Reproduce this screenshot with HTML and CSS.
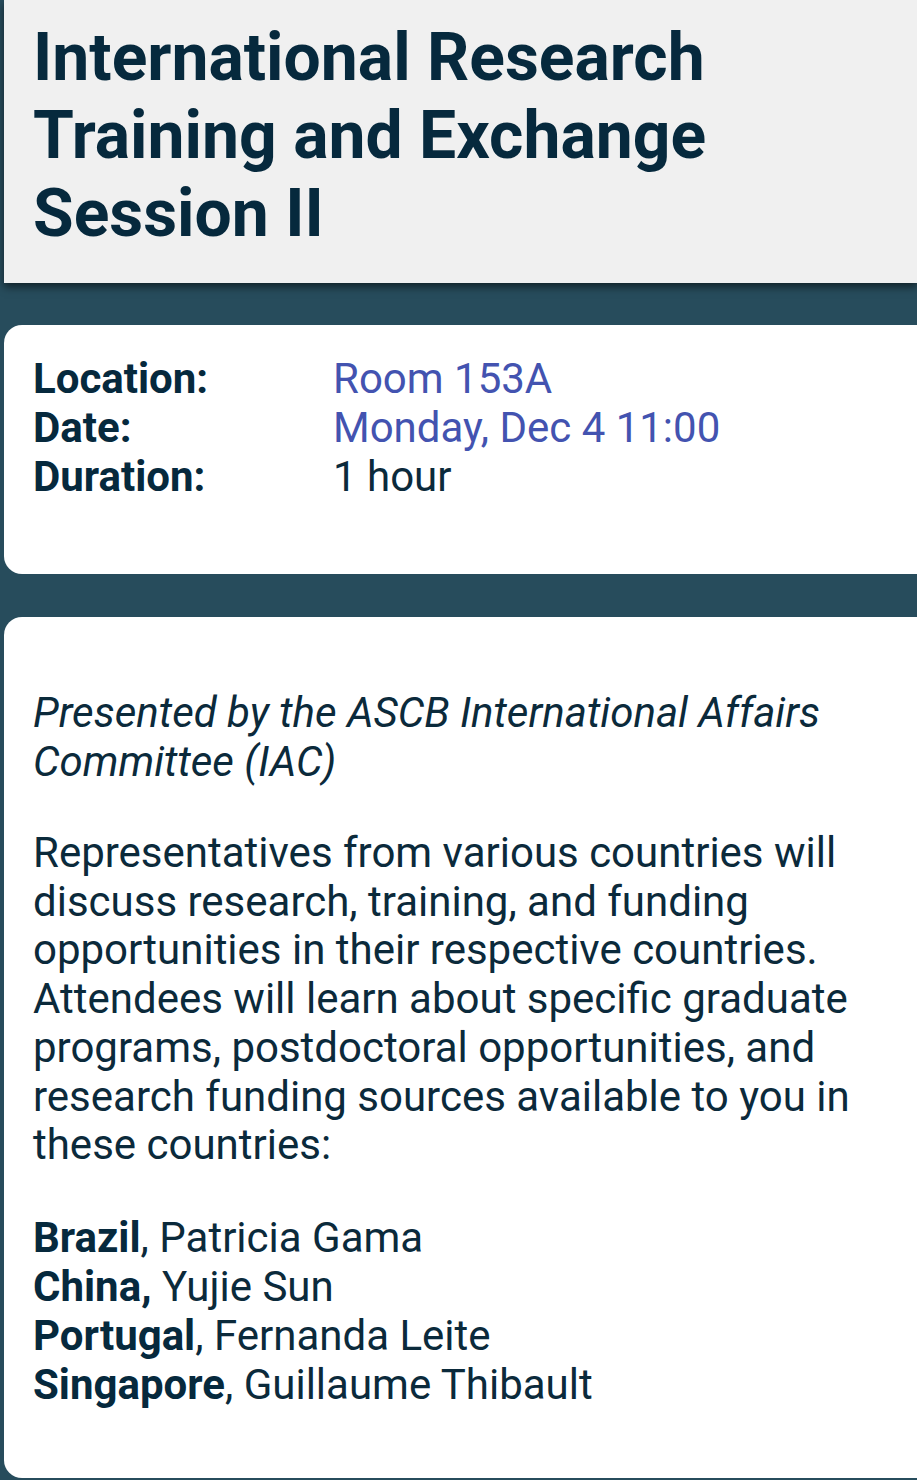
FILE: index.html
```html
<!DOCTYPE html>
<html lang="en">
<head>
<meta charset="utf-8">
<title>International Research Training and Exchange Session II</title>
<link rel="stylesheet" href="styles.css">
</head>
<body>
<header class="header">
  <h1 class="title">International Research Training and Exchange Session II</h1>
</header>
<section class="card info">
  <div class="info-grid">
    <div class="label">Location:</div><div class="value link">Room 153A</div>
    <div class="label">Date:</div><div class="value link">Monday, Dec 4 11:00</div>
    <div class="label">Duration:</div><div class="value">1 hour</div>
  </div>
</section>
<section class="card desc">
  <p class="intro">Presented by the ASCB International Affairs Committee (IAC)</p>
  <p class="para">Representatives from various countries will discuss research, training, and funding opportunities in their respective countries. Attendees will learn about specific graduate programs, postdoctoral opportunities, and research funding sources available to you in these countries:</p>
  <p class="list"><b>Brazil</b>, Patricia Gama<br><b>China,</b> Yujie Sun<br><b>Portugal</b>, Fernanda Leite<br><b>Singapore</b>, Guillaume Thibault</p>
</section>
</body>
</html>
```

FILE: styles.css
```css
html, body {
  margin: 0;
  padding: 0;
}
body {
  background: #274c5c;
  font-family: Roboto, "Noto Sans", sans-serif;
  color: #0b2a3b;
  min-height: 1480px;
  overflow: hidden;
}
.header {
  margin-left: 4px;
  background: #f0f0f0;
  height: 283px;
  box-sizing: border-box;
  padding: 19px 30px 0 29px;
  box-shadow: 0 4px 8px rgba(0, 0, 0, 0.55);
  position: relative;
}
.title {
  margin: 0;
  font-size: 66px;
  font-weight: 700;
  line-height: 78px;
  color: #06293d;
}
.card {
  margin-left: 4px;
  background: #ffffff;
  border-radius: 18px 0 0 18px;
  padding-left: 29px;
  padding-right: 30px;
  font-size: 42px;
  line-height: 49px;
}
.info {
  margin-top: 42px;
  height: 249px;
  box-sizing: border-box;
  padding-top: 29px;
}
.info-grid {
  display: grid;
  grid-template-columns: 300px 1fr;
}
.label {
  font-weight: 700;
  color: #06293d;
}
.value {
  color: #0b2a3b;
}
.link {
  color: #4353b0;
}
.desc {
  margin-top: 43px;
  padding-top: 71px;
  height: 861px;
  box-sizing: border-box;
}
.desc p {
  margin: 0 0 43px 0;
}
.intro {
  font-style: italic;
}
.para {
  line-height: 48.7px;
}
.list b {
  color: #06293d;
}
```
